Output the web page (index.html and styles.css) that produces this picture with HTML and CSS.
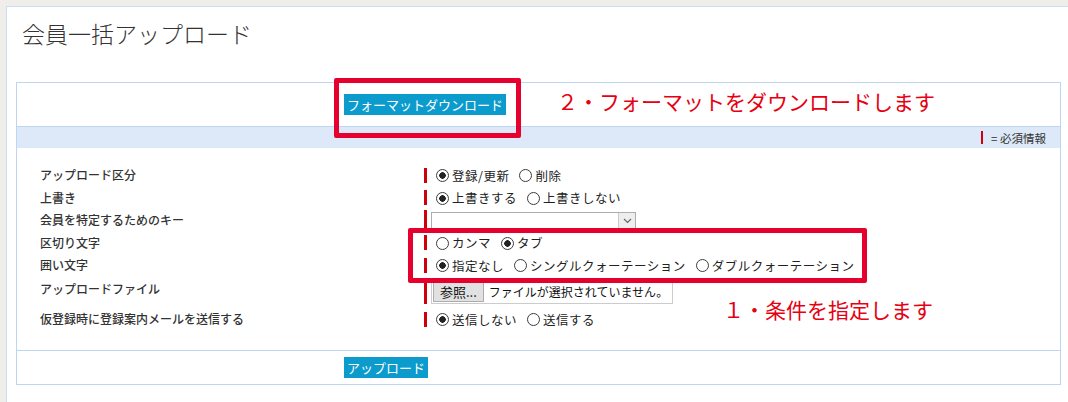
FILE: index.html
```html
<!DOCTYPE html>
<html lang="ja">
<head>
    <meta charset="UTF-8">
    <meta name="viewport" content="width=device-width, initial-scale=1.0">
    <title>会員一括アップロード</title>
    <link rel="stylesheet" href="styles.css">
</head>
<body>
    <div class="page">
        <h1 class="page-title">会員一括アップロード</h1>

        <div class="sheet">
            <div class="sheet-head">
                <button type="button" class="btn">フォーマットダウンロード</button>
            </div>
            <div class="sheet-note"><span class="mark"></span>= 必須情報</div>

            <form class="form" onsubmit="return false">
                <div class="row">
                    <div class="label">アップロード区分</div>
                    <div class="field">
                        <label class="opt"><input type="radio" name="kubun" checked>登録/更新</label>
                        <label class="opt"><input type="radio" name="kubun">削除</label>
                    </div>
                </div>
                <div class="row">
                    <div class="label">上書き</div>
                    <div class="field">
                        <label class="opt"><input type="radio" name="uwagaki" checked>上書きする</label>
                        <label class="opt"><input type="radio" name="uwagaki">上書きしない</label>
                    </div>
                </div>
                <div class="row">
                    <div class="label">会員を特定するためのキー</div>
                    <div class="field">
                        <div class="select">
                            <span class="select-value"></span>
                            <span class="select-arrow">
                                <svg width="9" height="6" viewBox="0 0 9 6"><path d="M1 1l3.5 3.5L8 1" fill="none" stroke="#666" stroke-width="1.2"/></svg>
                            </span>
                        </div>
                    </div>
                </div>
                <div class="row">
                    <div class="label">区切り文字</div>
                    <div class="field">
                        <label class="opt"><input type="radio" name="kugiri">カンマ</label>
                        <label class="opt"><input type="radio" name="kugiri" checked>タブ</label>
                    </div>
                </div>
                <div class="row">
                    <div class="label">囲い文字</div>
                    <div class="field">
                        <label class="opt"><input type="radio" name="kakoi" checked>指定なし</label>
                        <label class="opt"><input type="radio" name="kakoi">シングルクォーテーション</label>
                        <label class="opt"><input type="radio" name="kakoi">ダブルクォーテーション</label>
                    </div>
                </div>
                <div class="row row-file">
                    <div class="label">アップロードファイル</div>
                    <div class="field">
                        <label class="file">
                            <input type="file" class="file-input">
                            <span class="file-btn">参照...</span>
                            <span class="file-name">ファイルが選択されていません。</span>
                        </label>
                    </div>
                </div>
                <div class="row">
                    <div class="label">仮登録時に登録案内メールを送信する</div>
                    <div class="field">
                        <label class="opt"><input type="radio" name="mail" checked>送信しない</label>
                        <label class="opt"><input type="radio" name="mail">送信する</label>
                    </div>
                </div>
            </form>

            <div class="sheet-foot">
                <button type="button" class="btn">アップロード</button>
            </div>
        </div>

        <!-- 説明用の注釈 -->
        <div class="note-box note-box-format"></div>
        <div class="note-text note-text-format">２・フォーマットをダウンロードします</div>
        <div class="note-box note-box-cond"></div>
        <div class="note-text note-text-cond">１・条件を指定します</div>
    </div>
</body>
</html>
```

FILE: styles.css
```css
* {
    box-sizing: border-box;
}
body {
    margin: 0;
    background: #efeeeb;
    font-family: "Noto Sans CJK JP", "Noto Sans", sans-serif;
    color: #333;
}
.page {
    position: relative;
    margin: 6px 0 0 6px;
    min-height: 396px;
    background: #fff;
    border-top: 1px solid #c8ddf4;
    border-left: 1px solid #c8ddf4;
    overflow: hidden;
}
.page-title {
    margin: 0;
    padding: 10px 0 0 15px;
    font-size: 23px;
    font-weight: 300;
    line-height: 32px;
    color: #333;
}

/* 一覧の枠 */
.sheet {
    margin: 33px 7px 0 9px;
    border: 1px solid #bed6f2;
}
.sheet-head {
    display: flex;
    align-items: center;
    height: 43px;
    padding-left: 327px;
}
.btn {
    height: 21px;
    padding: 0 3px;
    border: none;
    background: #0c9bcd;
    color: #fff;
    font-family: inherit;
    font-size: 13px;
    line-height: 21px;
}
.sheet-note {
    display: flex;
    align-items: center;
    justify-content: flex-end;
    height: 22px;
    padding-right: 14px;
    border-top: 1px solid #bed6f2;
    background: #dde9f8;
    font-size: 11.5px;
    color: #333;
}
.sheet-note .mark {
    width: 2px;
    height: 13px;
    margin-right: 8px;
    background: #d0000a;
}

/* 入力欄 */
.form {
    padding: 16px 0 19px;
}
.row {
    display: grid;
    grid-template-columns: 407px 1fr;
    align-items: center;
    height: 22.5px;
}
.row-file {
    height: 31.5px;
    align-items: start;
    padding-top: 3px;
}
.label {
    padding-left: 23px;
    font-size: 12px;
    font-weight: 500;
    line-height: 16px;
    color: #333;
}
.row-file .label {
    padding-top: 1px;
}
.field {
    display: flex;
    align-items: center;
    min-height: 15px;
    padding-left: 4px;
    border-left: 3px solid #d0000a;
}
.row-file .field {
    min-height: 24px;
}
.opt {
    display: flex;
    align-items: center;
    margin-right: 5px;
    font-size: 12.5px;
    letter-spacing: 0.5px;
    line-height: 15px;
    color: #222;
}
.opt input {
    appearance: none;
    width: 13px;
    height: 13px;
    margin: 1px 3px 0 5px;
    border: 1px solid #3c3c3c;
    border-radius: 50%;
    background: #fff;
}
.opt input:checked {
    background: radial-gradient(circle, #222 0 3px, #fff 3.5px);
}

.select {
    display: flex;
    width: 205px;
    height: 18px;
    margin-top: 2px;
    border: 1px solid #adadad;
    background: #fff;
}
.select-value {
    flex: 1;
}
.select-arrow {
    display: flex;
    align-items: center;
    justify-content: center;
    width: 17px;
    border-left: 1px solid #c9c9c9;
    background: #eee;
}

.file {
    display: flex;
    align-items: center;
    width: 242px;
    height: 24px;
    padding: 1px;
    border: 1px solid #ccc;
}
.file-input {
    display: none;
}
.file-btn {
    height: 20px;
    padding: 0 6px;
    border: 1px solid #adadad;
    background: #e1e1e1;
    font-size: 13px;
    line-height: 18px;
    color: #111;
}
.file-name {
    margin-left: 5px;
    font-size: 12px;
    color: #111;
}

.sheet-foot {
    padding: 6px 0 6px 327px;
    border-top: 1px solid #bed6f2;
}
.sheet-foot .btn {
    display: block;
}

/* 赤枠の注釈 */
.note-box {
    position: absolute;
    border: 5px solid #e6002d;
    border-radius: 2px;
}
.note-box-format {
    left: 327px;
    top: 71px;
    width: 187px;
    height: 60px;
}
.note-box-cond {
    left: 401px;
    top: 221px;
    width: 459px;
    height: 55px;
}
.note-text {
    position: absolute;
    font-size: 21px;
    font-weight: 400;
    line-height: 28px;
    color: #e60012;
    white-space: nowrap;
}
.note-text-format {
    left: 550px;
    top: 80px;
}
.note-text-cond {
    left: 716px;
    top: 288px;
}
```
